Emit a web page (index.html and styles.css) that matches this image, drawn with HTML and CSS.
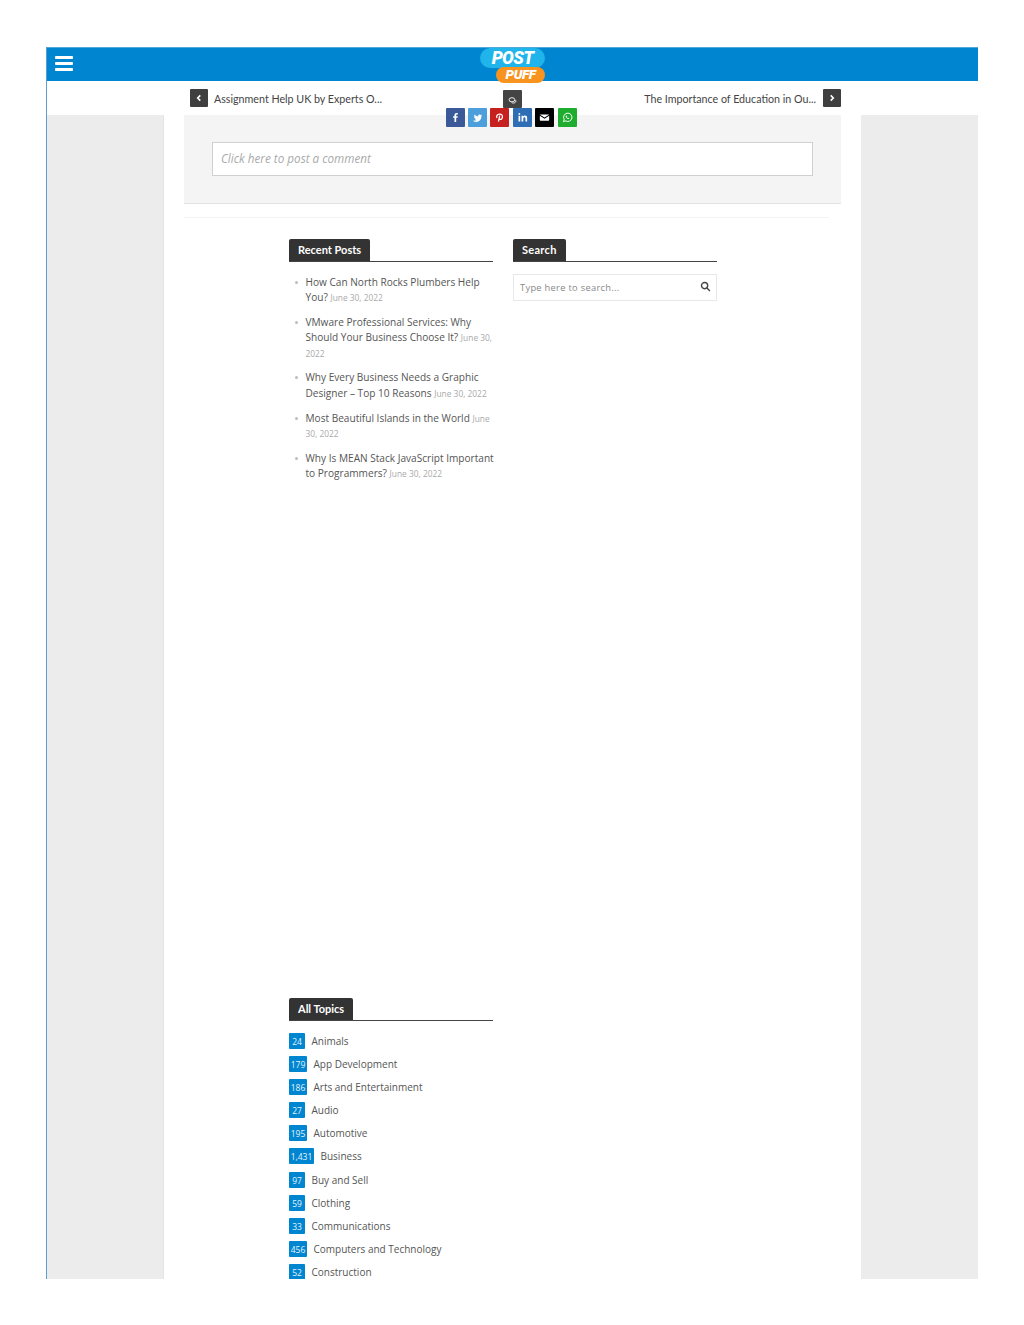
FILE: index.html
```html
<!DOCTYPE html>
<html lang="en">
<head>
  <meta charset="UTF-8">
  <title>Post Puff</title>
  <link rel="stylesheet" href="styles.css">
</head>
<body>
  <div class="frame">
    <header class="topbar">
      <div class="burger"><span></span><span></span><span></span></div>
      <div class="logo">
        <span class="logo-post">POST</span>
        <span class="logo-puff">PUFF</span>
      </div>
    </header>

    <nav class="postnav">
      <a class="postnav-link">
        <span class="arrow"><svg viewBox="0 0 10 10"><path d="M6.300 2.400 3.700 5l2.600 2.600"/></svg></span>
        Assignment Help UK by Experts O...
      </a>
      <a class="postnav-link postnav-next">
        The Importance of Education in Ou...
        <span class="arrow"><svg viewBox="0 0 10 10"><path d="M3.700 2.400 6.300 5 3.700 7.600"/></svg></span>
      </a>
    </nav>

    <div class="comment-toggle">
      <svg viewBox="0 0 10 10"><ellipse cx="4.400" cy="4.200" rx="3.200" ry="2.300"/><path d="M4 7.200c1 .9 3.600 1 4.600-.7.4-.8.1-1.500-.5-2"/></svg>
    </div>

    <div class="share">
      <span class="share-btn fb"><svg viewBox="0 0 20 20"><path class="solid" d="M11 16.500v-6h2l.3-2.300H11V6.800c0-.7.2-1.100 1.100-1.100h1.300V3.600c-.3 0-1-.1-1.900-.1-1.800 0-3 1.100-3 3.100v1.600h-2v2.300h2v6z" transform="translate(10 10) scale(.72) translate(-10 -10)"/></svg></span>
      <span class="share-btn tw"><svg viewBox="0 0 20 20"><path class="solid" d="M5 14.600c4.700 2.500 10-.6 9.800-6l1.100-1.200-1.400.3.900-1.300-1.400.6c-1.300-1.400-3.700-.4-3.200 1.700-1.900 0-3.500-.9-4.600-2.300-.6 1.100-.3 2.400.7 3.100l-1.100-.3c0 1.100.8 2 1.900 2.300l-1 .1c.3.900 1.100 1.500 2.100 1.500-1 .7-2.400 1-3.800.5z" transform="translate(10 10) scale(.85) translate(-10 -10)"/></svg></span>
      <span class="share-btn pin"><svg viewBox="0 0 20 20"><path class="line" d="M7.300 10.600c-.9-1.800.2-4.200 2.800-4.200 2.100 0 3.200 1.400 3 3.200-.2 1.800-1.500 2.700-2.600 2.300-.6-.2-.9-.7-.9-1.200M10.200 8l-1.300 6.300"/></svg></span>
      <span class="share-btn li"><svg viewBox="0 0 20 20"><path class="solid" d="M5.800 8.200h1.800v6h-1.800zM5.700 6.200a1 1 0 1 1 2 0 1 1 0 0 1-2 0zM9 8.200h1.700v.8c.4-.6 1-1 1.900-1 1.800 0 2.300 1.100 2.300 2.800v3.400h-1.800v-3c0-.9-.2-1.500-1-1.500s-1.300.6-1.300 1.500v3H9z"/></svg></span>
      <span class="share-btn mail"><svg viewBox="0 0 20 20"><path class="solid" d="M5.800 6.800h8.400c.3 0 .4.100.5.200L10 10.100 5.300 7c.1-.1.300-.2.500-.2zM5.100 8.200 10 11.400l4.900-3.200v4.400c0 .4-.3.700-.7.700H5.800c-.4 0-.7-.3-.7-.7z"/></svg></span>
      <span class="share-btn wa"><svg viewBox="0 0 20 20"><path class="line thin" d="M5.800 14.300l.7-2.300a4.400 4.400 0 1 1 1.600 1.600z"/><path class="solid" d="M8.600 7.900c-.4.300-.7.900-.3 1.600.4.900 1.100 1.500 2.100 2 .7.200 1.300-.1 1.500-.6l-1-.7-.5.400c-.4-.2-.8-.6-1.100-1.100l.3-.5-.5-1z"/></svg></span>
    </div>

    <div class="columns">
      <div class="side"></div>
      <main class="center">
        <section class="comment-box">
          <div class="comment-input">Click here to post a comment</div>
        </section>
        <div class="divider"></div>

        <div class="widgets">
          <div class="widget-col">
            <section class="widget recent">
              <h3 class="widget-title"><span>Recent Posts</span></h3>
              <ul class="recent-list">
                <li>How Can North Rocks Plumbers Help You? <small>June 30, 2022</small></li>
                <li>VMware Professional Services: Why Should Your Business Choose It? <small>June 30, 2022</small></li>
                <li>Why Every Business Needs a Graphic Designer – Top 10 Reasons <small>June 30, 2022</small></li>
                <li>Most Beautiful Islands in the World <small>June 30, 2022</small></li>
                <li>Why Is MEAN Stack JavaScript Important to Programmers? <small>June 30, 2022</small></li>
              </ul>
            </section>

            <section class="widget topics">
              <h3 class="widget-title"><span>All Topics</span></h3>
              <ul class="topic-list">
                <li><span class="count">24</span>Animals</li>
                <li><span class="count">179</span>App Development</li>
                <li><span class="count">186</span>Arts and Entertainment</li>
                <li><span class="count">27</span>Audio</li>
                <li><span class="count">195</span>Automotive</li>
                <li><span class="count">1,431</span>Business</li>
                <li><span class="count">97</span>Buy and Sell</li>
                <li><span class="count">59</span>Clothing</li>
                <li><span class="count">33</span>Communications</li>
                <li><span class="count">456</span>Computers and Technology</li>
                <li><span class="count">52</span>Construction</li>
              </ul>
            </section>
          </div>

          <div class="widget-col">
            <section class="widget">
              <h3 class="widget-title widget-title-wide"><span>Search</span></h3>
              <div class="search">
                <span>Type here to search...</span>
                <svg viewBox="0 0 12 12"><circle cx="5" cy="5" r="3.400"/><path d="M7.600 7.600 10.800 10.800"/></svg>
              </div>
            </section>
          </div>
        </div>
      </main>
      <div class="side"></div>
    </div>
  </div>
</body>
</html>
```

FILE: styles.css
```css
body {
  margin: 0;
  background: #fff;
  font-family: "Open Sans", sans-serif;
  color: #555;
}
.frame {
  position: relative;
  margin: 47px 46px 0;
  height: 1232px;
  overflow: hidden;
  display: flex;
  flex-direction: column;
  border-left: 1px solid #5a9fd0;
}

/* top bar */
.topbar {
  height: 34px;
  flex: none;
  background: #0085d0;
  border-top: 1px solid #4ea8dc;
  box-sizing: border-box;
  display: flex;
  align-items: center;
  padding: 0 0 2px 8px;
}
.burger {
  width: 18px;
  display: flex;
  flex-direction: column;
  gap: 3px;
}
.burger span {
  height: 3px;
  background: #fff;
  border-radius: 1px;
}
.logo {
  position: absolute;
  left: 433px;
  top: 1px;
  width: 66px;
  height: 35px;
  font-family: Roboto, sans-serif;
  font-style: italic;
  font-weight: 900;
  color: #fff;
  text-align: center;
}
.logo-post {
  position: absolute;
  left: 0;
  top: 0;
  width: 65px;
  height: 20px;
  line-height: 20px;
  border-radius: 10px;
  background: #1fb4ea;
  font-size: 17.500px;
  letter-spacing: -.6px;
}
.logo-puff {
  position: absolute;
  left: 16px;
  top: 19px;
  width: 49px;
  height: 16px;
  line-height: 14px;
  border-radius: 8px;
  background: #f7931e;
  font-size: 13.500px;
  letter-spacing: -.4px;
}

/* prev / next row */
.postnav {
  height: 34px;
  flex: none;
  display: flex;
  justify-content: space-between;
  align-items: center;
  padding: 0 137px 0 143px;
  font-family: Lato, sans-serif;
  font-size: 10.700px;
  color: #444;
}
.postnav-link {
  display: flex;
  align-items: center;
  gap: 6px;
}
.postnav-next { gap: 7px; }
.arrow {
  width: 18px;
  height: 18px;
  background: #3f3f3f;
  border-radius: 1px;
  display: flex;
  align-items: center;
  justify-content: center;
}
.arrow svg {
  width: 10px;
  height: 10px;
  fill: none;
  stroke: #fff;
  stroke-width: 1.600;
}
.comment-toggle {
  position: absolute;
  left: 456px;
  top: 43px;
  width: 19px;
  height: 18px;
  background: #444;
  border-radius: 1px;
  display: flex;
  align-items: center;
  justify-content: center;
}
.comment-toggle svg {
  width: 9px;
  height: 9px;
  margin-top: 3px;
  fill: none;
  stroke: #fff;
  stroke-width: 1;
}
.share {
  position: absolute;
  left: 398.600px;
  top: 61px;
  display: flex;
  gap: 3.400px;
}
.share-btn {
  width: 19px;
  height: 19px;
  border-radius: 1px;
  display: flex;
}
.share-btn svg { width: 19px; height: 19px; }
.share-btn .solid { fill: #fff; }
.share-btn .line { fill: none; stroke: #fff; stroke-width: 1.300; }
.share-btn .thin { stroke-width: 1; }
.fb { background: #3b5998; }
.tw { background: #4d9fdc; }
.pin { background: #c7211f; }
.li { background: #2f6db5; }
.mail { background: #000; }
.wa { background: #1fad2f; }

/* page columns */
.columns {
  flex: 1;
  display: grid;
  grid-template-columns: 117px 697px 117px;
}
.side {
  background: #ececec;
  border-right: 1px solid #e4e4e4;
}
.side:last-child { border-right: 0; }
.center {
  padding: 0 20px;
}
.comment-box {
  height: 89px;
  box-sizing: border-box;
  padding: 27px 28px 0 28px;
  background: #f4f4f4;
  border-bottom: 1px solid #e2e2e2;
}
.comment-input {
  height: 34px;
  box-sizing: border-box;
  line-height: 31px;
  padding-left: 8px;
  background: #fff;
  border: 1px solid #d0d0d0;
  font-size: 11.700px;
  font-style: italic;
  color: #aaa;
}
.divider {
  height: 1px;
  margin: 13px 12px 0 0;
  background: #f2f2f2;
}

/* widgets */
.widgets {
  display: flex;
  gap: 20px;
  padding: 21px 0 0 105px;
}
.widget-col { width: 204px; }
.widget-title {
  margin: 0;
  height: 22px;
  border-bottom: 1px solid #444;
  font-family: Lato, sans-serif;
  font-size: 11px;
  font-weight: 700;
  color: #fff;
}
.widget-title span {
  display: inline-block;
  height: 22px;
  line-height: 22px;
  padding: 0 9px;
  background: #333;
  border-radius: 2px 2px 0 0;
}
.widget-title-wide { letter-spacing: .3px; }
.recent { height: 759px; }
.recent-list {
  list-style: none;
  margin: 13px -3px 0 0;
  padding: 0;
  font-size: 10.100px;
  line-height: 15.300px;
  color: #555;
}
.recent-list li {
  position: relative;
  padding-left: 16.500px;
  margin-bottom: 9.500px;
}
.recent-list li::before {
  content: "";
  position: absolute;
  left: 5.500px;
  top: 6px;
  width: 3px;
  height: 3px;
  border-radius: 50%;
  background: #bbb;
}
.recent-list small {
  font-size: 8.400px;
  color: #aaa;
}
.topic-list {
  list-style: none;
  margin: 12px 0 0;
  padding: 0;
  font-size: 10px;
  color: #555;
}
.topic-list li {
  height: 23.100px;
  display: flex;
  align-items: flex-start;
  line-height: 16px;
}
.count {
  min-width: 16px;
  height: 16px;
  box-sizing: border-box;
  padding: 0 1.700px;
  margin-right: 6.500px;
  background: #0085d0;
  border-radius: 1px;
  color: #e4f3fb;
  font-size: 8.500px;
  line-height: 17px;
  text-align: center;
}
.search {
  margin-top: 12px;
  height: 27px;
  box-sizing: border-box;
  padding: 0 5px 0 6px;
  border: 1px solid #e8e8e8;
  display: flex;
  justify-content: space-between;
  align-items: center;
  font-size: 9.300px;
  letter-spacing: .3px;
  color: #888;
}
.search svg {
  width: 11px;
  height: 11px;
  margin-top: -2px;
  fill: none;
  stroke: #444;
  stroke-width: 1.500;
}
```
